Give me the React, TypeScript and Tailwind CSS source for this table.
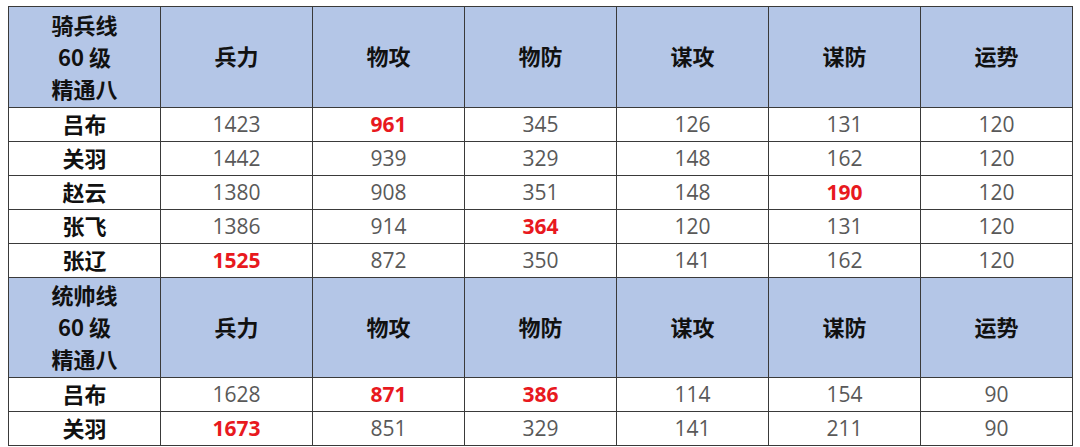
const cols = ['兵力', '物攻', '物防', '谋攻', '谋防', '运势'];

type Row = { name: string; values: (number | string)[]; hot: number[] };

const groups: { title: string[]; rows: Row[] }[] = [
  {
    title: ['骑兵线', '60 级', '精通八'],
    rows: [
      { name: '吕布', values: [1423, 961, 345, 126, 131, 120], hot: [1] },
      { name: '关羽', values: [1442, 939, 329, 148, 162, 120], hot: [] },
      { name: '赵云', values: [1380, 908, 351, 148, 190, 120], hot: [4] },
      { name: '张飞', values: [1386, 914, 364, 120, 131, 120], hot: [2] },
      { name: '张辽', values: [1525, 872, 350, 141, 162, 120], hot: [0] },
    ],
  },
  {
    title: ['统帅线', '60 级', '精通八'],
    rows: [
      { name: '吕布', values: [1628, 871, 386, 114, 154, 90], hot: [1, 2] },
      { name: '关羽', values: [1673, 851, 329, 141, 211, 90], hot: [0] },
    ],
  },
];

const cjk = "font-['Noto_Sans_CJK_SC','Noto_Sans',sans-serif]";

export default function App() {
  return (
    <div className="w-[1080px] h-[447px] overflow-hidden bg-white pl-[8px] pt-[6px]">
      <table className="table-fixed border-collapse w-[1065px]">
        <colgroup>
          {Array.from({ length: 7 }).map((_, i) => (
            <col key={i} className="w-[152px]" />
          ))}
        </colgroup>
        <tbody>
          {groups.map((g, gi) => (
            <>
              <tr key={`h${gi}`} className={gi === 0 ? 'h-[101px]' : 'h-[100px]'}>
                <td className={`border border-[#3a3a3a] bg-[#b4c6e7] text-center text-[22px] leading-[32px] pb-[3px] font-bold text-[#111] ${cjk}`}>
                  {g.title.map((t) => (
                    <div key={t}>{t}</div>
                  ))}
                </td>
                {cols.map((c) => (
                  <td
                    key={c}
                    className={`border border-[#3a3a3a] bg-[#b4c6e7] text-center text-[22px] pb-[3px] font-bold text-[#111] ${cjk}`}
                  >
                    {c}
                  </td>
                ))}
              </tr>
              {g.rows.map((r, ri) => (
                <tr key={`r${gi}-${ri}`} className="h-[34px]">
                  <td className={`border border-[#3a3a3a] text-center text-[22px] leading-[22px] pb-[4px] font-bold text-[#111] ${cjk}`}>
                    {r.name}
                  </td>
                  {r.values.map((v, vi) => (
                    <td
                      key={vi}
                      className={`border border-[#3a3a3a] text-center text-[21px] leading-[20px] pb-[2px] font-['Open_Sans',sans-serif] ${
                        r.hot.includes(vi) ? 'font-bold text-[#e8191e]' : 'font-normal text-[#595959]'
                      }`}
                    >
                      {v}
                    </td>
                  ))}
                </tr>
              ))}
            </>
          ))}
        </tbody>
      </table>
    </div>
  );
}
